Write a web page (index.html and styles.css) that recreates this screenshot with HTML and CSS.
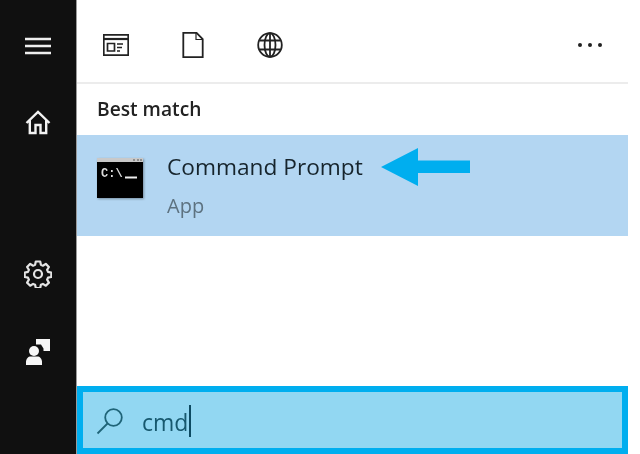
FILE: index.html
```html
<!DOCTYPE html>
<html lang="en">
<head>
<meta charset="utf-8">
<title>Search</title>
<link rel="stylesheet" href="styles.css">
</head>
<body>
<div class="app">
  <nav class="rail">
    <div class="rail-group">
      <div class="rail-btn">
        <svg width="28" height="18" viewBox="0 0 28 18"><path d="M1 2h26M1 9h26M1 16h26" stroke="#eee" stroke-width="2.400" fill="none"/></svg>
      </div>
      <div class="rail-btn">
        <svg width="26" height="26" viewBox="0 0 26 26" fill="none" stroke="#f2f2f2" stroke-width="2.400"><path d="M1.500 13 13 2l11.500 11M4.800 10.500V23h5.700v-8h5v8h5.700V10.500"/></svg>
      </div>
    </div>
    <div class="rail-group">
      <div class="rail-btn">
        <svg class="gear" width="28" height="28" viewBox="0 0 28 28" fill="none" stroke="#e4e4e4"><circle cx="14" cy="14" r="4" stroke-width="2.200"/><path stroke-width="2.200" stroke-linejoin="round" d="M11.800 1.500h4.400l.7 3.300 2 .9 2.900-1.800 3.100 3.100-1.800 2.900.9 2 3.300.7v4.400l-3.300.7-.9 2 1.800 2.900-3.100 3.100-2.900-1.800-2 .9-.7 3.300h-4.400l-.7-3.300-2-.9-2.900 1.800-3.100-3.100 1.800-2.900-.9-2-3.300-.7v-4.400l3.300-.7.900-2-1.800-2.900 3.100-3.100 2.900 1.800 2-.9z"/></svg>
      </div>
      <div class="rail-btn">
        <svg width="26" height="28" viewBox="0 0 26 28" fill="#f6f6f6"><path d="M11 1h14v12h-6.500v-2.500l-2.500-4h-5z"/><circle cx="9" cy="13" r="5"/><path d="M1 27v-3c0-3.500 2.500-5.500 4.500-5.500h7c2 0 4.500 2 4.500 5.500v3z"/></svg>
      </div>
    </div>
  </nav>
  <main class="panel">
    <header class="toolbar">
      <div class="tool">
        <svg width="26" height="22" viewBox="0 0 26 22" fill="none" stroke="#222" stroke-width="1.700"><path d="M.8.800h24.400v20.400H.8z"/><path stroke-width="2.200" d="M1 5h24"/><path d="M4.500 9.500h7v7.500h-7zM14 10h6M14 13.500h5M14 17h3"/></svg>
      </div>
      <div class="tool">
        <svg width="22" height="26" viewBox="0 0 22 26" fill="none" stroke="#222" stroke-width="1.800"><path d="M1.300.8h13.200l6.200 6.200v18.200H1.300z"/><path d="M14 1v6.500h6.500" stroke-width="1.200"/></svg>
      </div>
      <div class="tool">
        <svg width="26" height="26" viewBox="0 0 26 26" fill="none" stroke="#222" stroke-width="1.800"><circle cx="13" cy="13" r="11.800"/><ellipse cx="13" cy="13" rx="5.500" ry="11.800"/><path d="M13 1v24M2.500 8.500h21M2.500 17.500h21"/></svg>
      </div>
      <div class="more"><i></i><i></i><i></i></div>
    </header>
    <h2 class="section">Best match</h2>
    <div class="result">
      <svg class="cmd" width="48" height="42" viewBox="0 0 48 42">
        <rect x="1" y="1" width="46" height="40" fill="#000"/>
        <rect x="1" y="1" width="46" height="4" fill="#c9c9c9"/>
        <path d="M37 3h2M41 3h2M44 3h2" stroke="#555"/>
        <text class="cmd-text" x="5" y="20">C:\</text>
        <path d="M29 20.500h12" stroke="#eee" stroke-width="2"/>
      </svg>
      <div class="result-text">
        <div class="title-row">
          <span class="title">Command Prompt</span>
          <svg class="arrow" width="89" height="38" viewBox="0 0 89 38"><path d="M0 19 37 0v12.500h52v12.500H37V38z" fill="#00aeef"/></svg>
        </div>
        <div class="kind">App</div>
      </div>
    </div>
    <div class="spacer"></div>
    <div class="search">
      <svg class="search-icon" width="28" height="28" viewBox="0 0 28 28" fill="none" stroke="#1f6478" stroke-width="1.800"><circle cx="17.500" cy="10.500" r="8.300"/><path d="M11.500 16.500 1.500 26.500"/></svg>
      <span class="query">cmd</span><span class="caret"></span>
    </div>
  </main>
</div>
</body>
</html>
```

FILE: styles.css
```css
* { box-sizing: border-box; }
html, body { margin: 0; padding: 0; background: #fff; }
body { width: 640px; height: 454px; overflow: hidden; font-family: "Open Sans", "Noto Sans", sans-serif; }
.app { display: flex; width: 640px; height: 454px; filter: blur(0.45px); }
.rail { width: 77px; flex: none; background: #101010; border-right: 1px solid #9a9a9a; display: flex; flex-direction: column; justify-content: space-between; padding: 7px 0 64px; }
.rail-btn { height: 77px; display: flex; align-items: center; justify-content: center; }
.gear { margin-top: -2px; }
.panel { width: 551px; flex: none; display: flex; flex-direction: column; }
.toolbar { height: 84px; flex: none; display: flex; align-items: center; padding-top: 8px; border-bottom: 2px solid #ececec; }
.tool { width: 77px; display: flex; justify-content: center; }
.more { margin-left: auto; margin-right: 26px; display: flex; gap: 6px; }
.more i { width: 4px; height: 4px; border-radius: 50%; background: #222; }
.section { margin: 0; height: 51px; flex: none; padding: 12px 0 0 20px; font-size: 19.200px; line-height: 26px; font-weight: 600; color: #222; }
.result { height: 101px; flex: none; background: #b3d6f2; display: flex; padding-left: 19px; }
.cmd { margin-top: 22px; flex: none; filter: drop-shadow(1px 1px 1px rgba(60, 70, 80, 0.5)); }
.cmd-text { font-family: "Liberation Mono", monospace; font-size: 12px; font-weight: 700; fill: #ddd; }
.result-text { margin-left: 23px; padding-top: 16px; }
.title-row { display: flex; align-items: center; height: 32px; }
.title { font-size: 22.700px; line-height: 32px; color: #16242c; white-space: nowrap; }
.arrow { margin-left: 18px; flex: none; }
.kind { margin-top: 10px; font-size: 20px; line-height: 26px; color: #5d7280; }
.spacer { flex: 1; }
.search { height: 68px; flex: none; background: #92d7f2; border: 6px solid #00aeef; display: flex; align-items: center; padding-left: 13px; }
.search-icon { margin-top: 2px; }
.query { margin-left: 18px; padding-top: 3px; font-size: 23px; line-height: 32px; color: #17586e; }
.caret { width: 2px; height: 32px; margin-left: 1px; margin-top: 1px; background: #0d4a62; }
```
